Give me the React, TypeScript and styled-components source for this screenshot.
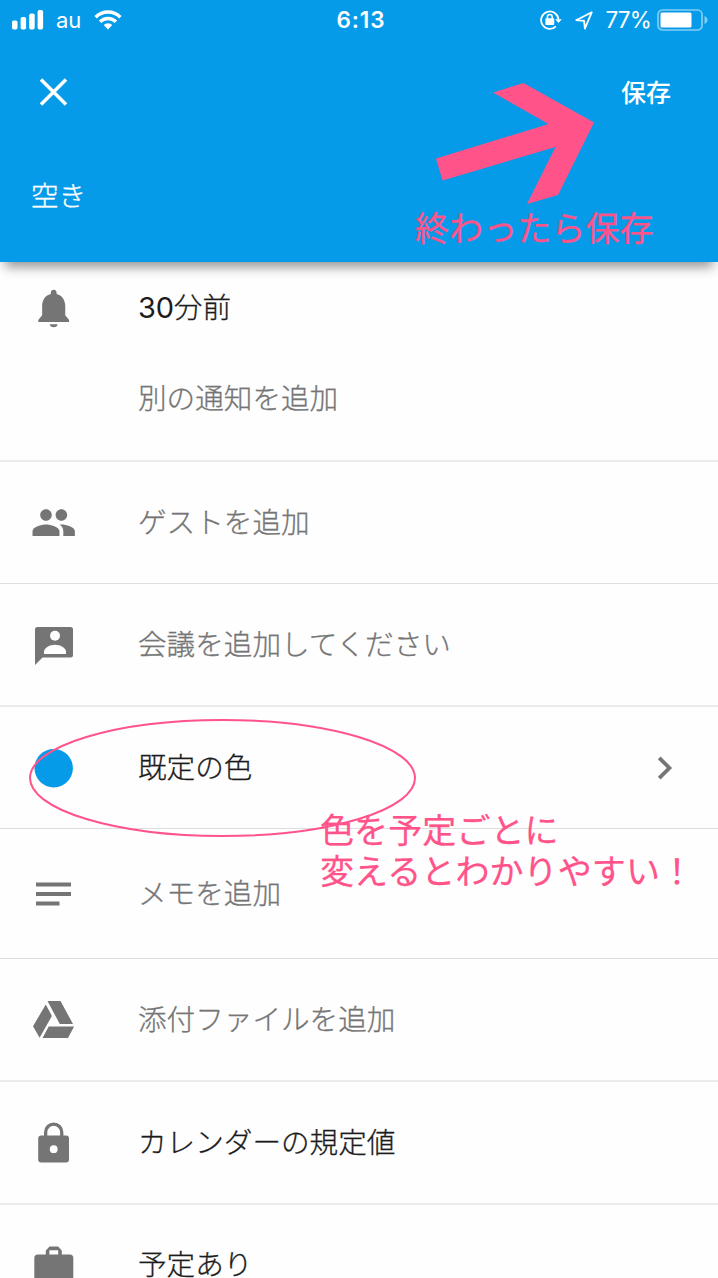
import React from "react";
import styled, { createGlobalStyle } from "styled-components";

const BLUE = "#059be8";
const PINK = "#ff538a";
const GREY = "#757575";

const GlobalStyle = createGlobalStyle`
  * { box-sizing: border-box; }
  html, body { margin: 0; padding: 0; overflow: hidden; background: #fefefe; }
`;

const Screen = styled.div`
  position: relative;
  display: flex;
  flex-direction: column;
  width: 718px;
  height: 1278px;
  overflow: hidden;
  background: #fefefe;
  font-family: Inter, "Noto Sans CJK JP", sans-serif;
`;

const Header = styled.header`
  position: relative;
  flex: none;
  display: flex;
  flex-direction: column;
  height: 262px;
  background: ${BLUE};
  color: #fff;
  box-shadow: 0 10px 11px -5px rgba(0, 0, 0, 0.42);
`;

const StatusBar = styled.div`
  display: grid;
  grid-template-columns: 1fr auto 1fr;
  align-items: center;
  height: 40px;
  padding: 0 10px 0 12px;
`;

const StatusGroup = styled.div<{ $end?: boolean }>`
  display: flex;
  align-items: center;
  justify-content: ${(p) => (p.$end ? "flex-end" : "flex-start")};
`;

const StatusText = styled.span<{ $bold?: boolean; $size?: number; $spacing?: number }>`
  font-size: ${(p) => p.$size ?? 22}px;
  font-weight: ${(p) => (p.$bold ? 600 : 400)};
  letter-spacing: ${(p) => p.$spacing ?? 0}px;
  line-height: 40px;
`;

const Clock = styled(StatusText)`
  padding-left: 2px;
`;

const Carrier = styled(StatusText)`
  margin: 0 13px 0 12px;
`;

const Percent = styled(StatusText)`
  margin: 0 6px 0 12px;
`;

const RotationLock = styled.svg`
  margin-right: 13px;
`;

const ActionBar = styled.div`
  display: flex;
  align-items: center;
  justify-content: space-between;
  height: 104px;
  padding: 0 47px 0 38px;
`;

const SaveButton = styled.button`
  padding: 0 0 2px;
  border: 0;
  background: none;
  color: #fff;
  font: 500 25px/40px "Noto Sans CJK JP", sans-serif;
`;

const HeaderLabel = styled.div`
  padding: 31px 0 0 31px;
  font-size: 27.5px;
  line-height: 42px;
  font-weight: 300;
  -webkit-text-stroke: 0.3px #fff;
`;

const List = styled.main`
  flex: none;
  display: flex;
  flex-direction: column;
`;

const Row = styled.div<{ $height: number; $thick?: boolean }>`
  flex: none;
  display: flex;
  align-items: center;
  height: ${(p) => p.$height}px;
  padding: 0 39px 0 30px;
  border-bottom: ${(p) => (p.$thick ? "2px solid #ebebeb" : "1px solid #dedede")};
`;

const ReminderSection = styled.section`
  height: 200px;
  border-bottom: 2px solid #ebebeb;
`;

const ReminderLine = styled.div`
  display: flex;
  align-items: center;
  height: 91px;
  padding-left: 30px;
`;

const IconSlot = styled.div`
  flex: none;
  width: 48px;
  height: 48px;
  margin-right: 60px;
`;

const Label = styled.div<{ $strong?: boolean }>`
  flex: 1;
  font-size: 28.6px;
  line-height: 40px;
  font-weight: 300;
  white-space: nowrap;
  color: ${(p) => (p.$strong ? "#1c1c1c" : "#757575")};
  -webkit-text-stroke: 0.3px currentColor;
`;

const Digits = styled.span`
  font-size: 29px;
  font-weight: 400;
  letter-spacing: -0.2px;
  -webkit-text-stroke: 0;
`;

const Marks = styled.svg`
  position: absolute;
  inset: 0;
  pointer-events: none;
`;

const Note = styled.div<{ $x: number; $y: number }>`
  position: absolute;
  left: ${(p) => p.$x}px;
  top: ${(p) => p.$y}px;
  color: ${PINK};
  font: 400 34px/41px "Noto Sans CJK JP", sans-serif;
  letter-spacing: 0.1px;
  -webkit-text-stroke: 0.25px ${PINK};
  white-space: pre;
`;

function Icon({ children }: { children?: React.ReactNode }) {
  return (
    <IconSlot>
      <svg width="48" height="48" viewBox="0 0 48 48" fill={GREY}>
        {children}
      </svg>
    </IconSlot>
  );
}

/* Material glyphs on a 24-unit grid, centred in the 48px slot. */
function Glyph({ d, dy = 0 }: { d: string; dy?: number }) {
  return <path transform={`translate(0.6 ${1 + dy}) scale(1.925)`} d={d} />;
}

function Signal() {
  return (
    <svg width="32" height="20" viewBox="0 0 32 20" fill="#fff">
      <rect x="0" y="10.5" width="5.5" height="9" rx="1.8" />
      <rect x="8.6" y="7" width="5.5" height="12.5" rx="1.8" />
      <rect x="17.2" y="3.5" width="5.5" height="16" rx="1.8" />
      <rect x="25.6" y="0" width="5.5" height="19.5" rx="1.8" />
    </svg>
  );
}

function Wifi() {
  return (
    <svg width="28" height="20" viewBox="0 0 28 20" fill="none" stroke="#fff" strokeWidth="3.5">
      <path d="M1.6 7.2A17.5 17.5 0 0 1 26.4 7.2" />
      <path d="M6 11.7A11.3 11.3 0 0 1 22 11.7" />
      <path d="M14 19.4 9.7 15.1A6.2 6.2 0 0 1 18.3 15.1Z" fill="#fff" stroke="none" />
    </svg>
  );
}

function Battery() {
  return (
    <svg width="51" height="22" viewBox="0 0 51 22">
      <rect x="1" y="1" width="44" height="20" rx="4.5" fill="none" stroke="#fff" strokeOpacity=".5" strokeWidth="1.7" />
      <rect x="3.5" y="3.5" width="31" height="15" rx="1.5" fill="#fff" />
      <path d="M47.5 7v8c4-1.6 4-6.4 0-8Z" fill="#fff" fillOpacity=".5" />
    </svg>
  );
}

export default function App() {
  return (
    <>
      <GlobalStyle />
      <Screen>
        <Header>
          <StatusBar>
            <StatusGroup>
              <Signal />
              <Carrier>au</Carrier>
              <Wifi />
            </StatusGroup>
            <Clock $bold $size={22.5} $spacing={0.9}>6:13</Clock>
            <StatusGroup $end>
              <RotationLock width="22" height="20" viewBox="0 0 22 20" fill="none" stroke="#fff" strokeWidth="1.8">
                <path d="M15.9 16.4A8.7 8.7 0 1 1 18.5 9.5" />
                <path d="M15.2 9.2h6.6l-3.3 3.8Z" fill="#fff" stroke="none" />
                <rect x="5.4" y="8.2" width="8.8" height="6.8" rx="1" fill="#fff" stroke="none" />
                <path d="M7.4 9V6.9a2.4 2.4 0 0 1 4.8 0V9" strokeWidth="1.5" />
              </RotationLock>
              <svg width="18" height="19" viewBox="0 0 18 19" fill="none" stroke="#fff" strokeWidth="1.8" strokeLinejoin="round">
                <path d="M16.7 1.3 1.2 9.2l7.9.6.8 7.9Z" />
              </svg>
              <Percent $size={22.5} $spacing={-0.8}>77%</Percent>
              <Battery />
            </StatusGroup>
          </StatusBar>
          <ActionBar>
            <svg width="30" height="30" viewBox="0 0 30 30" stroke="#fff" strokeWidth="3.5">
              <path d="M3 2.5 28 27.5M28 2.5 3 27.5" />
            </svg>
            <SaveButton>保存</SaveButton>
          </ActionBar>
          <HeaderLabel>空き</HeaderLabel>
        </Header>

        <List>
          <ReminderSection>
            <ReminderLine>
              <Icon>
                <Glyph d="M12 22c1.1 0 2-.7 2-1.6h-4c0 .9.9 1.6 2 1.6zm6-6.3v-4.7c0-3.07-1.64-5.64-4.5-6.32V4c0-.83-.67-1.5-1.5-1.5s-1.5.67-1.5 1.5v.68C7.63 5.36 6 7.92 6 11v4.7l-2 2.5v1h16v-1l-2-2.5z" />
              </Icon>
              <Label $strong>
                <Digits>30</Digits>分前
              </Label>
            </ReminderLine>
            <ReminderLine>
              <Icon />
              <Label>別の通知を追加</Label>
            </ReminderLine>
          </ReminderSection>
          <Row $height={122}>
            <Icon>
              <Glyph
                dy={-0.5}
                d="M16 11c1.66 0 2.99-1.34 2.99-3S17.66 5 16 5c-1.66 0-3 1.34-3 3s1.34 3 3 3zm-8 0c1.66 0 2.99-1.34 2.99-3S9.66 5 8 5C6.34 5 5 6.34 5 8s1.34 3 3 3zm0 2c-2.33 0-7 1.17-7 3.5V19h14v-2.5c0-2.33-4.67-3.5-7-3.5zm8 0c-.29 0-.62.02-.97.05 1.16.84 1.97 1.97 1.97 3.45V19h6v-2.5c0-2.33-4.67-3.5-7-3.5z"
              />
            </Icon>
            <Label>ゲストを追加</Label>
          </Row>
          <Row $height={123} $thick>
            <Icon>
              <path d="M7.5 6h33a2.5 2.5 0 0 1 2.5 2.5v25.5a2.5 2.5 0 0 1-2.5 2.5H12.5L5 44V8.5A2.5 2.5 0 0 1 7.5 6Z" />
              <circle cx="25" cy="14.7" r="5" fill="#fefefe" />
              <path d="M14 33v-2.2c0-4.2 6.2-7 11-7s11 2.8 11 7V33Z" fill="#fefefe" />
            </Icon>
            <Label>会議を追加してください</Label>
          </Row>
          <Row $height={122}>
            <Icon>
              <circle cx="23.7" cy="24.2" r="19.2" fill={BLUE} />
            </Icon>
            <Label $strong>既定の色</Label>
            <svg width="24" height="26" viewBox="0 0 24 26" fill="none" stroke={GREY} strokeWidth="3.8">
              <path d="M4.2 2.8 14.4 13 4.2 23.2" />
            </svg>
          </Row>
          <Row $height={130}>
            <Icon>
              <path d="M6 12.5h35v4H6zM6 22h35v4H6zM6 31.6h23.5v4H6z" />
            </Icon>
            <Label>メモを追加</Label>
          </Row>
          <Row $height={123} $thick>
            <Icon>
              <path d="M17.5 5h13l12.5 23H29.8ZM15.8 8.500l6.100 11.500L9.600 41.800 3 30.200ZM18.700 30.500h25.400l-6.100 11.500H12.500Z" />
            </Icon>
            <Label>添付ファイルを追加</Label>
          </Row>
          <Row $height={123} $thick>
            <Icon>
              <path
                transform="translate(0 -0.5)"
                fillRule="evenodd"
                d="M11.2 17H14v-3.3a9.7 9.7 0 0 1 19.4 0V17h2.6a3 3 0 0 1 3 3v21a3 3 0 0 1-3 3H11.2a3 3 0 0 1-3-3V20a3 3 0 0 1 3-3ZM17.3 17h12.8v-3.3a6.4 6.4 0 0 0-12.8 0ZM23.7 26.8a3.900 3.900 0 1 0 0 7.800 3.900 3.900 0 1 0 0-7.800Z"
              />
            </Icon>
            <Label $strong>カレンダーの規定値</Label>
          </Row>
          <Row $height={120}>
            <Icon>
              <path
                fillRule="evenodd"
                d="M8 14h8v-4l3.700-4h8.600l3.700 4v4h8a3.500 3.500 0 0 1 3.500 3.500V44h-39V17.500A3.500 3.500 0 0 1 8 14ZM19.600 14h8.800v-4.400h-8.800Z"
                transform="translate(-0.2 -0.4)"
              />
            </Icon>
            <Label $strong>予定あり</Label>
          </Row>
        </List>

        <Marks width="718" height="1278" viewBox="0 0 718 1278">
          <path d="M493 92.5 523.5 83 594 122.5 558 195 527 204 555.5 147 442.5 180.5 436 158.5 548.5 124Z" fill={PINK} />
          <ellipse cx="222.5" cy="778" rx="192.5" ry="58" fill="none" stroke={PINK} strokeWidth="2" />
        </Marks>
        <Note $x={415} $y={206}>終わったら保存</Note>
        <Note $x={320} $y={808}>{"色を予定ごとに\n変えるとわかりやすい！"}</Note>
      </Screen>
    </>
  );
}
